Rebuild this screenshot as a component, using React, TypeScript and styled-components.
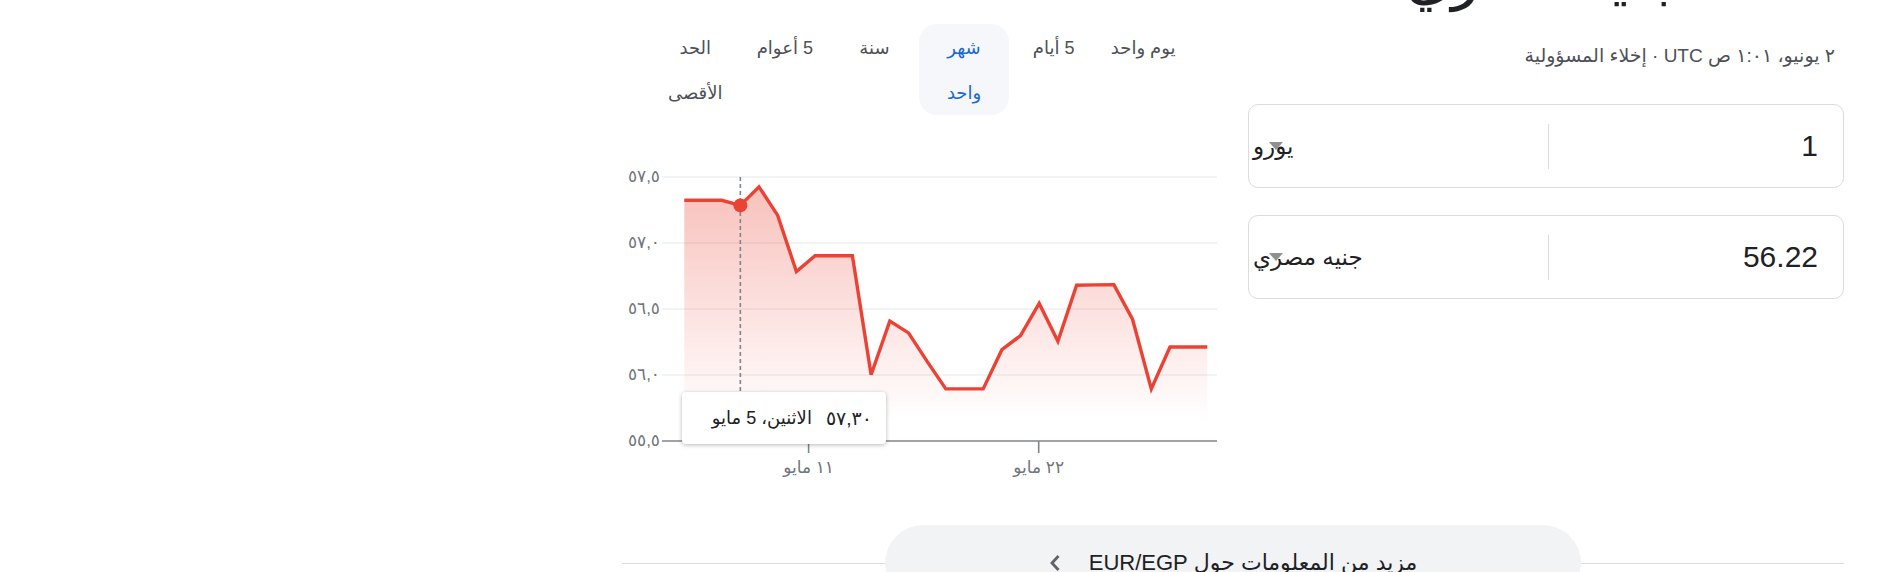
import styled, { createGlobalStyle } from 'styled-components';

const GlobalStyle = createGlobalStyle`
  html, body {
    margin: 0;
    padding: 0;
    background: #fff;
  }
  body {
    font-family: "Liberation Sans", "DejaVu Sans", Arial, sans-serif;
    color: #202124;
    overflow: hidden;
  }
`;

// y positions (chart px) of the daily points, left to right
const series = [
	80.3, 80.3, 80.3, 85.4, 66.9, 95.4, 151.5, 135.7, 135.7, 135.7, 254.8,
	201.1, 212.9, 241.4, 268.9, 268.9, 268.9, 229.7, 215.6, 183.4, 221.3,
	165.2, 164.9, 164.6, 199.5, 268.9, 227, 227, 227,
];
const X0 = 62.3;
const STEP = 18.68;
const AXIS_Y = 321;
const HOVER = 3;

const yTicks = [
	{ y: 57, label: '٥٧,٥' },
	{ y: 123, label: '٥٧,٠' },
	{ y: 189, label: '٥٦,٥' },
	{ y: 255, label: '٥٦,٠' },
];
const xTicks = [
	{ x: 186.6, label: '١١ مايو' },
	{ x: 416.7, label: '٢٢ مايو' },
];

const tabs = [
	{ lines: ['يوم واحد'] },
	{ lines: ['5 أيام'] },
	{ lines: ['شهر', 'واحد'], active: true },
	{ lines: ['سنة'] },
	{ lines: ['5 أعوام'] },
	{ lines: ['الحد', 'الأقصى'] },
];

const App = () => {
	const pts = series.map((y, i) => [X0 + i * STEP, y]);
	const line = pts.map(([x, y], i) => `${i ? 'L' : 'M'}${x.toFixed(1)} ${y}`).join(' ');
	const last = pts[pts.length - 1];
	const area = `${line} L${last[0].toFixed(1)} ${AXIS_Y} L${X0} ${AXIS_Y} Z`;
	const [hx, hy] = pts[HOVER];

	return (
		<>
			<GlobalStyle />
			<Page>
				<Top>
					<ConverterColumn>
						<Title>56.22 جنيه مصري</Title>
						<DateLine>
							٢ يونيو، ١:٠١ ص UTC · <Disclaimer>إخلاء المسؤولية</Disclaimer>
						</DateLine>
						<Boxes>
							<CurrencyBox>
								<Amount>1</Amount>
								<Divider />
								<Currency>
									<CurrencyName>يورو</CurrencyName>
									<Caret />
								</Currency>
							</CurrencyBox>
							<CurrencyBox>
								<Amount>56.22</Amount>
								<Divider />
								<Currency>
									<CurrencyName>جنيه مصري</CurrencyName>
									<Caret />
								</Currency>
							</CurrencyBox>
						</Boxes>
					</ConverterColumn>

					<ChartColumn>
						<Tabs>
							{tabs.map((t) => (
								<Tab key={t.lines.join(' ')} $active={t.active}>
									{t.lines.map((l) => (
										<div key={l}>{l}</div>
									))}
								</Tab>
							))}
						</Tabs>
						<ChartWrap>
							<svg width="595" height="360" viewBox="0 0 595 360" style={{ direction: 'ltr' }}>
								<defs>
									<linearGradient id="fill" x1="0" y1="60" x2="0" y2="300" gradientUnits="userSpaceOnUse">
										<stop offset="0" stopColor="#ea4335" stopOpacity="0.34" />
										<stop offset="1" stopColor="#ea4335" stopOpacity="0" />
									</linearGradient>
								</defs>
								{yTicks.map((t) => (
									<g key={t.label}>
										<line x1="40" x2="595" y1={t.y} y2={t.y} stroke="#eeeff1" strokeWidth="1.5" />
										<AxisText x="38" y={t.y + 5} textAnchor="end">
											{t.label}
										</AxisText>
									</g>
								))}
								<path d={area} fill="url(#fill)" />
								<line x1={hx} x2={hx} y1="57" y2="272" stroke="#80868b" strokeWidth="1.6" strokeDasharray="4 3" />
								<path d={line} fill="none" stroke="#ea4335" strokeWidth="3.4" strokeLinejoin="miter" />
								<circle cx={hx} cy={hy} r="7" fill="#ea4335" />
								<line x1="40" x2="595" y1={AXIS_Y} y2={AXIS_Y} stroke="#80868b" strokeWidth="1.6" />
								<AxisText x="38" y={AXIS_Y + 5} textAnchor="end">
									٥٥,٥
								</AxisText>
								{xTicks.map((t) => (
									<g key={t.label}>
										<line x1={t.x} x2={t.x} y1={AXIS_Y} y2={AXIS_Y + 12} stroke="#80868b" strokeWidth="1.6" />
										<MonthText x={t.x} y={AXIS_Y + 32} textAnchor="middle">
											{t.label}
										</MonthText>
									</g>
								))}
							</svg>
							<Tooltip>
								<TipValue>٥٧,٣٠</TipValue>
								<span>الاثنين، 5 مايو</span>
							</Tooltip>
						</ChartWrap>
					</ChartColumn>
				</Top>

				<MoreRow>
					<Rule />
					<MoreButton>
						<span>مزيد من المعلومات حول EUR/EGP</span>
						<svg width="12" height="18" viewBox="0 0 12 18">
							<path d="M9.5 2 L3 9 L9.5 16" fill="none" stroke="#5f6368" strokeWidth="2.8" />
						</svg>
					</MoreButton>
					<Rule />
				</MoreRow>
			</Page>
		</>
	);
};

export default App;

const Page = styled.div`
	width: 1222px;
	margin-left: 622px;
	direction: rtl;
`;

const Top = styled.div`
	display: flex;
	justify-content: space-between;
	align-items: flex-start;
	height: 480px;
`;

const ConverterColumn = styled.div`
	width: 596px;
	display: flex;
	flex-direction: column;
`;

const Title = styled.div`
	font-size: 58px;
	line-height: 70px;
	height: 70px;
	margin-top: -57px;
	color: #202124;
	white-space: nowrap;
`;

const DateLine = styled.div`
	margin-top: 31px;
	font-size: 19px;
	line-height: 24px;
	color: #4d5156;
	padding-right: 9px;
`;

const Disclaimer = styled.span`
	color: #4d5156;
`;

const Boxes = styled.div`
	margin-top: 36px;
	display: flex;
	flex-direction: column;
	gap: 27px;
`;

const CurrencyBox = styled.div`
	height: 84px;
	box-sizing: border-box;
	border: 1px solid #dadce0;
	border-radius: 10px;
	display: flex;
	align-items: center;
`;

const Amount = styled.div`
	width: 294px;
	box-sizing: border-box;
	padding-right: 25px;
	font-size: 30px;
	color: #202124;
	text-align: right;
	direction: ltr;
`;

const Divider = styled.div`
	width: 1px;
	height: 45px;
	background: #dadce0;
`;

const Currency = styled.div`
	flex: 1;
	position: relative;
	display: flex;
	justify-content: flex-end;
	padding-left: 4px;
`;

const CurrencyName = styled.span`
	font-size: 23px;
	color: #202124;
`;

const Caret = styled.span`
	position: absolute;
	left: 20px;
	top: 50%;
	margin-top: -4px;
	width: 0;
	height: 0;
	border-left: 7px solid transparent;
	border-right: 7px solid transparent;
	border-top: 8px solid #7d7d7d;
	opacity: 0.85;
`;

const ChartColumn = styled.div`
	width: 595px;
	display: flex;
	flex-direction: column;
`;

const Tabs = styled.div`
	margin-top: 24px;
	height: 91px;
	padding-right: 29px;
	display: flex;
	align-items: flex-start;
`;

const Tab = styled.div<{ $active?: boolean }>`
	width: 89.6px;
	flex: none;
	box-sizing: border-box;
	padding-top: 2px;
	text-align: center;
	font-size: 18px;
	line-height: 44.5px;
	border-radius: 18px;
	white-space: nowrap;
	color: ${(p) => (p.$active ? '#1967d2' : '#4d5156')};
	background: ${(p) => (p.$active ? '#f5f7fa' : 'transparent')};
`;

const ChartWrap = styled.div`
	position: relative;
	margin-top: 5px;
	width: 595px;
	height: 360px;

	svg {
		display: block;
	}
`;

const AxisText = styled.text`
	font-size: 17px;
	letter-spacing: 1.5px;
	fill: #70757a;
`;

const MonthText = styled.text`
	font-size: 17px;
	fill: #70757a;
`;

const Tooltip = styled.div`
	position: absolute;
	left: 60px;
	top: 272px;
	width: 204px;
	height: 52px;
	box-sizing: border-box;
	padding: 0 14px;
	background: #fff;
	border-radius: 4px;
	box-shadow: 0 1px 4px rgba(0, 0, 0, 0.28);
	display: flex;
	align-items: center;
	gap: 14px;
	font-size: 18px;
	color: #202124;
	white-space: nowrap;
`;

const TipValue = styled.span`
	font-size: 19px;
	letter-spacing: 1px;
`;

const MoreRow = styled.div`
	margin-top: 45px;
	display: flex;
	align-items: center;
`;

const Rule = styled.div`
	flex: 1;
	height: 1px;
	background: #dadce0;
`;

const MoreButton = styled.div`
	width: 696px;
	height: 76px;
	border-radius: 38px;
	background: #f1f3f4;
	display: flex;
	align-items: center;
	justify-content: center;
	gap: 28px;
	font-size: 22px;
	color: #202124;
`;
